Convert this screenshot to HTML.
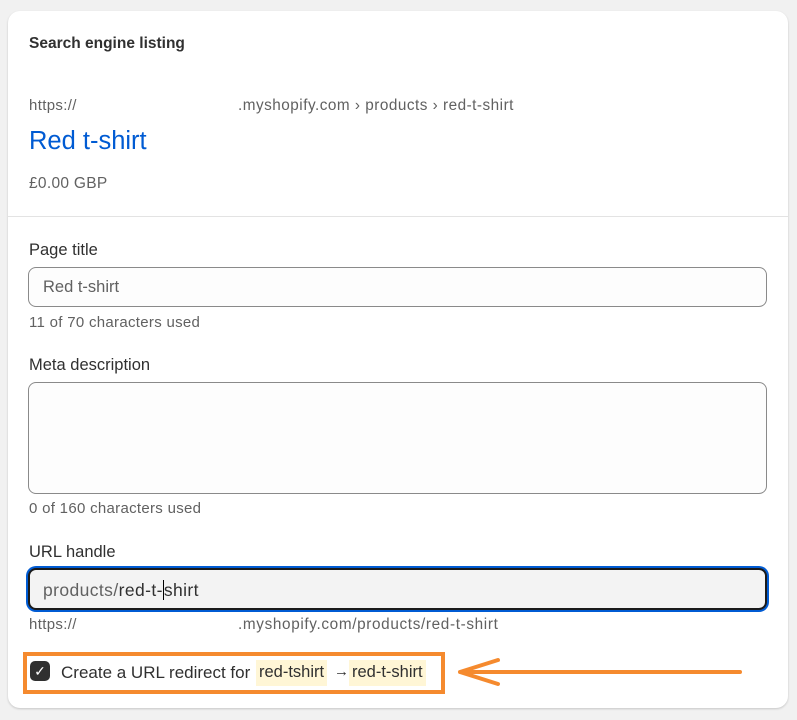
<!DOCTYPE html>
<html><head><meta charset="utf-8"><style>
*{margin:0;padding:0;box-sizing:border-box}
body{width:797px;height:720px;background:#f1f1f1;font-family:"Liberation Sans",sans-serif;position:relative;overflow:hidden;color:#303030}
.card{position:absolute;left:8px;top:11px;width:780px;height:697px;background:#fff;border-radius:12px;box-shadow:0 1px 2px rgba(0,0,0,.18)}
.t{position:absolute;white-space:nowrap}
.inp{position:absolute;left:28px;width:739px;border:1px solid #8a8a8a;border-radius:8px;background:#fdfdfd}
</style></head><body>
<div class="card"></div>
<div class="t" style="left:29px;top:35px;font-size:15.5px;font-weight:bold;color:#303030">Search engine listing</div>
<div class="t" style="left:29px;top:97px;font-size:15px;letter-spacing:0.35px;color:#616161">https://</div>
<div class="t" style="left:238px;top:97px;font-size:15.3px;letter-spacing:0.5px;color:#616161">.myshopify.com › products › red-t-shirt</div>
<div class="t" style="left:29px;top:127px;font-size:25.5px;color:#005bd3">Red t-shirt</div>
<div class="t" style="left:29px;top:175px;font-size:15.5px;letter-spacing:0.3px;color:#616161">£0.00 GBP</div>
<div style="position:absolute;left:8px;top:216px;width:780px;height:1px;background:#e3e3e3"></div>
<div class="t" style="left:29px;top:241px;font-size:16.5px">Page title</div>
<div class="inp" style="top:267px;height:40px"></div>
<div class="t" style="left:43px;top:278px;font-size:16.5px;color:#616161">Red t-shirt</div>
<div class="t" style="left:29px;top:314px;font-size:15px;letter-spacing:0.3px;color:#616161">11 of 70 characters used</div>
<div class="t" style="left:29px;top:356px;font-size:16.5px">Meta description</div>
<div class="inp" style="top:382px;height:112px"></div>
<div class="t" style="left:29px;top:500px;font-size:15px;letter-spacing:0.3px;color:#616161">0 of 160 characters used</div>
<div class="t" style="left:29px;top:543px;font-size:16.5px">URL handle</div>
<div class="inp" style="top:568px;height:42px;border:2px solid #1a1a1a;background:#f3f3f3;box-shadow:0 0 0 2px #005bd3"></div>
<div class="t" style="left:43px;top:580px;font-size:17.5px;letter-spacing:0.4px;color:#616161">products/<span style="color:#303030">red-t-<span style="border-left:1px solid #000">shirt</span></span></div>
<div class="t" style="left:29px;top:616px;font-size:15px;letter-spacing:0.35px;color:#616161">https://</div>
<div class="t" style="left:238px;top:616px;font-size:15.3px;letter-spacing:0.65px;color:#616161">.myshopify.com/products/red-t-shirt</div>
<div style="position:absolute;left:23px;top:652px;width:422px;height:42px;border:4px solid #f58a2e"></div>
<div style="position:absolute;left:30px;top:661px;width:20px;height:20px;background:#303030;border-radius:5px;color:#fff;font-size:14px;line-height:20px;text-align:center">✓</div>
<div class="t" style="left:61px;top:663px;font-size:17px">Create a URL redirect for</div>
<div class="t" style="left:256px;top:660px;font-size:16.5px;background:#fff6d6;padding:3px 3px 4px">red-tshirt</div>
<div class="t" style="left:334px;top:663px;font-size:15px">→</div>
<div class="t" style="left:349px;top:660px;font-size:16.5px;background:#fff6d6;padding:3px 3px 4px">red-t-shirt</div>
<svg style="position:absolute;left:440px;top:652px" width="310" height="40"><path d="M300 20 L20 20 M58 8 L20 20 L58 32" stroke="#f58a2e" stroke-width="4" fill="none" stroke-linecap="round" stroke-linejoin="round"/></svg>
</body></html>
